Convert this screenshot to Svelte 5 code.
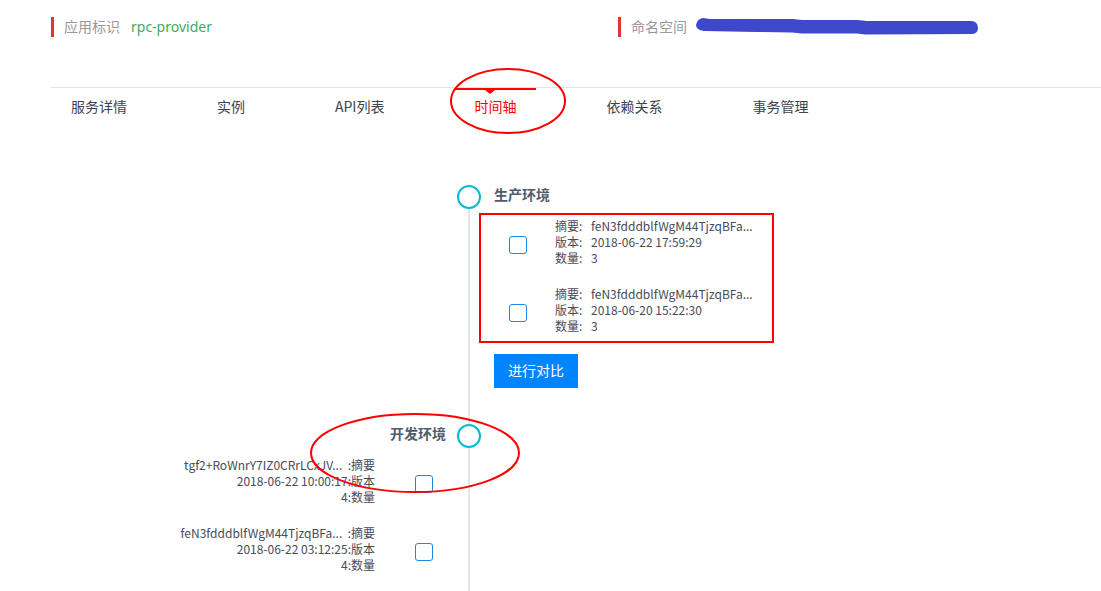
<script>
  const tabs = ['服务详情', '实例', 'API列表', '时间轴', '依赖关系', '事务管理'];
  let active = $state('时间轴');

  const stages = [
    {
      name: '生产环境',
      side: 'right',
      records: [
        { digest: 'feN3fdddblfWgM44TjzqBFa...', version: '2018-06-22 17:59:29', count: 3 },
        { digest: 'feN3fdddblfWgM44TjzqBFa...', version: '2018-06-20 15:22:30', count: 3 }
      ]
    },
    {
      name: '开发环境',
      side: 'left',
      records: [
        { digest: 'tgf2+RoWnrY7IZ0CRrLCxJV...', version: '2018-06-22 10:00:17', count: 4 },
        { digest: 'feN3fdddblfWgM44TjzqBFa...', version: '2018-06-22 03:12:25', count: 4 }
      ]
    }
  ];
</script>

<main>
  <header>
    <div class="field">
      <span class="label">应用标识</span>
      <span class="value">rpc-provider</span>
    </div>
    <div class="field">
      <span class="label">命名空间</span>
      <svg class="redaction" width="284" height="20" viewBox="0 0 284 20" aria-hidden="true">
        <path d="M7 1 L14 2 L97 2 L106 3 L162 3 L171 4 L276 4 Q282 5 282 11 Q282 16 277 17 L169 17.5 Q165 17 161 16.5 L106 16.5 L96 15.5 L60 15 L8 14 Q0 13 0 8 Q1 2 7 1Z" fill="#3f48cc" />
      </svg>
    </div>
  </header>

  <nav>
    {#each tabs as tab}
      <button type="button" class="tab" class:active={tab === active} onclick={() => (active = tab)}>
        {tab}
        {#if tab === '时间轴'}
          <svg class="mark tab-mark" width="118" height="68" viewBox="0 0 118 68" aria-hidden="true">
            <ellipse cx="59" cy="34" rx="57" ry="32" />
          </svg>
        {/if}
      </button>
    {/each}
  </nav>

  <div class="timeline">
    {#each stages as stage}
      <section class={stage.side}>
        <div class="axis"><span class="dot"></span><span class="line"></span></div>
        <div class="body">
          <h2>{stage.name}</h2>
          <div class="records">
            {#each stage.records as record}
              <label class="record">
                <input type="checkbox" />
                {#if stage.side === 'right'}
                  <span class="details">
                    <span class="key">摘要:</span><span>{record.digest}</span>
                    <span class="key">版本:</span><span>{record.version}</span>
                    <span class="key">数量:</span><span>{record.count}</span>
                  </span>
                {:else}
                  <span class="details">
                    <span>{record.digest}&nbsp; :摘要</span>
                    <span>{record.version}:版本</span>
                    <span>{record.count}:数量</span>
                  </span>
                {/if}
              </label>
            {/each}
          </div>
          {#if stage.side === 'right'}
            <button type="button" class="compare">进行对比</button>
            <span class="frame"></span>
          {:else}
            <svg class="mark stage-mark" width="212" height="82" viewBox="0 0 212 82" aria-hidden="true">
              <ellipse cx="106" cy="41" rx="104" ry="39" />
            </svg>
          {/if}
        </div>
      </section>
    {/each}
  </div>
</main>

<style>
  :global(body) {
    margin: 0;
    background: #fff;
    overflow: hidden;
  }
  :global(html), :global(body), :global(#app) {
    height: 100%;
  }
  main {
    box-sizing: border-box;
    min-height: 100%;
    display: flex;
    flex-direction: column;
    padding: 17px 0 0 51px;
    font-family: "Noto Sans CJK SC", sans-serif;
    font-size: 14px;
    line-height: 18px;
    color: #464c5b;
  }
  header {
    display: grid;
    grid-template-columns: 54% 46%;
    margin-bottom: 50px;
  }
  .field {
    display: flex;
    gap: 11px;
    height: 20px;
    padding-left: 10px;
    border-left: 3px solid #e03531;
  }
  .label {
    color: #999;
  }
  .value {
    color: #43a860;
    font-family: "Noto Sans", sans-serif;
    line-height: 20px;
  }
  .redaction {
    margin-left: -2px;
  }
  nav {
    display: flex;
    gap: 50px;
    border-top: 1px solid #e6e6e6;
  }
  button {
    border: 0;
    font: inherit;
    cursor: pointer;
  }
  .tab {
    position: relative;
    padding: 9px 20px 11px;
    background: none;
    color: #3d4351;
    white-space: nowrap;
  }
  .active {
    color: #f00;
    box-shadow: inset 0 2px #f00;
  }
  .active::after {
    content: "";
    position: absolute;
    top: 2px;
    left: 31px;
    border: 5px solid transparent;
    border-top: 4px solid #f00;
    border-bottom: 0;
  }
  .mark {
    position: absolute;
    fill: none;
    stroke: #f00;
    stroke-width: 2px;
    pointer-events: none;
  }
  .tab-mark {
    top: -21px;
    left: -5px;
  }
  .timeline {
    flex: 1;
    display: flex;
    flex-direction: column;
    margin-top: 59px;
  }
  section {
    display: grid;
    grid-template-columns: 406fr 24px 620fr;
    color: #515a6e;
  }
  section:last-child {
    flex: 1;
  }
  .axis {
    grid-area: 1 / 2;
    display: flex;
    flex-direction: column;
    align-items: center;
  }
  .dot {
    box-sizing: border-box;
    width: 24px;
    height: 24px;
    border: 2px solid #00bcd4;
    border-radius: 50%;
  }
  .line {
    flex: 1;
    width: 2px;
    background: #e6e6e6;
  }
  .body {
    position: relative;
    display: flex;
    flex-direction: column;
  }
  .right .body {
    grid-area: 1 / 3;
    align-items: flex-start;
    padding: 0 0 36px 13px;
  }
  .left .body {
    grid-area: 1 / 1;
    align-items: flex-end;
    padding-right: 11px;
  }
  h2 {
    margin: 0 0 15px;
    font-size: 14px;
    line-height: 18px;
    font-weight: 700;
  }
  .records {
    display: flex;
    flex-direction: column;
    gap: 20px;
  }
  .record {
    display: flex;
    align-items: flex-start;
    font-size: 12px;
    line-height: 16px;
    color: #464c5b;
  }
  .right .record {
    gap: 28px;
    padding-left: 15px;
  }
  .left .record {
    flex-direction: row-reverse;
    gap: 40px;
    padding-right: 13px;
  }
  input {
    appearance: none;
    box-sizing: border-box;
    flex: none;
    width: 18px;
    height: 18px;
    margin: 18px 0 0;
    border: 1px solid #1e88e5;
    border-radius: 3px;
    background: #fff;
  }
  input:checked {
    background: #1e88e5;
  }
  .details {
    display: grid;
    white-space: nowrap;
  }
  .right .details {
    grid-template-columns: 36px auto;
  }
  .left .details {
    text-align: right;
  }
  .compare {
    height: 34px;
    margin-top: 20px;
    padding: 0 14px 2px;
    background: #0084ff;
    color: #fff;
  }
  .frame {
    position: absolute;
    top: 28px;
    left: -2px;
    box-sizing: border-box;
    width: 295px;
    height: 130px;
    border: 2px solid #f00;
    pointer-events: none;
  }
  .stage-mark {
    top: -12px;
    right: -64px;
  }
</style>
